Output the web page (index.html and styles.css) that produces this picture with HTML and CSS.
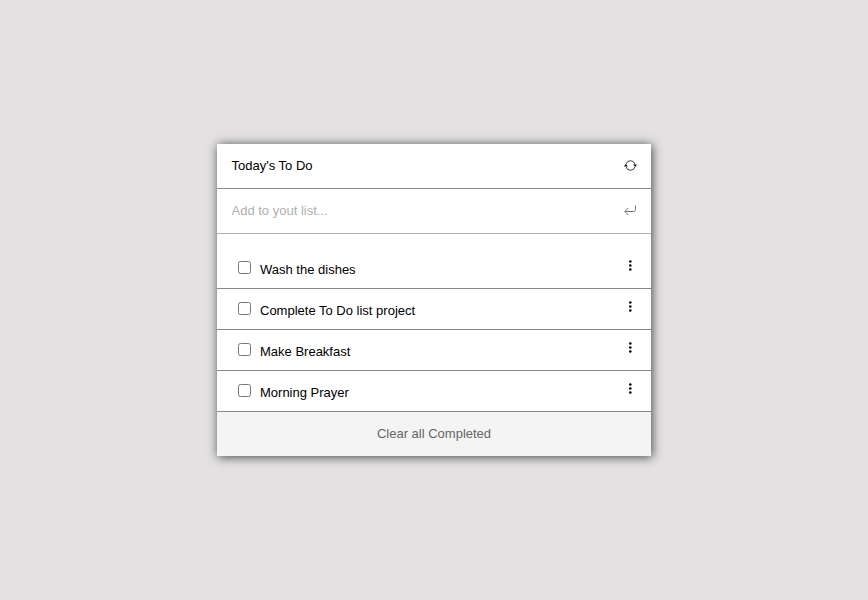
FILE: index.html
```html
<!DOCTYPE html>
<html lang="en">
<head>
<meta charset="utf-8">
<title>To Do</title>
<link rel="stylesheet" href="styles.css">
</head>
<body>
<main class="card">
  <header class="row head">
    <span>Today's To Do</span>
    <svg class="icon" viewBox="0 0 13 13"><path d="M2.1 5A4.6 4.6 0 0 1 10.9 5M10.9 8A4.6 4.6 0 0 1 2.1 8" fill="none" stroke="#222" stroke-width=".9"/><path d="M0 7.4 1.9 5.1 3.8 7.4zM9.2 5.6 11.1 7.9 13 5.6z"/></svg>
  </header>
  <div class="row add">
    <input class="entry" type="text" placeholder="Add to yout list...">
    <svg class="icon" viewBox="0 0 13 13"><path d="M11.5 1.5V5.5Q11.5 7.5 9.5 7.5H1M4.3 4 .9 7.5 4.3 11" fill="none" stroke="#777"/></svg>
  </div>
  <ul class="list">
    <li class="item"><input class="check" type="checkbox"><span class="text">Wash the dishes</span><svg class="dots" viewBox="0 0 3 12"><circle cx="1.3" cy="1.5" r="1.3"/><circle cx="1.3" cy="5.5" r="1.3"/><circle cx="1.3" cy="9.5" r="1.3"/></svg></li>
    <li class="item"><input class="check" type="checkbox"><span class="text">Complete To Do list project</span><svg class="dots" viewBox="0 0 3 12"><circle cx="1.3" cy="1.5" r="1.3"/><circle cx="1.3" cy="5.5" r="1.3"/><circle cx="1.3" cy="9.5" r="1.3"/></svg></li>
    <li class="item"><input class="check" type="checkbox"><span class="text">Make Breakfast</span><svg class="dots" viewBox="0 0 3 12"><circle cx="1.3" cy="1.5" r="1.3"/><circle cx="1.3" cy="5.5" r="1.3"/><circle cx="1.3" cy="9.5" r="1.3"/></svg></li>
    <li class="item"><input class="check" type="checkbox"><span class="text">Morning Prayer</span><svg class="dots" viewBox="0 0 3 12"><circle cx="1.3" cy="1.5" r="1.3"/><circle cx="1.3" cy="5.5" r="1.3"/><circle cx="1.3" cy="9.5" r="1.3"/></svg></li>
  </ul>
  <button class="clear" type="button">Clear all Completed</button>
</main>
</body>
</html>
```
FILE: styles.css
```css
* { box-sizing: border-box; }
body {
  margin: 0;
  min-height: 100vh;
  display: flex;
  align-items: center;
  justify-content: center;
  background: #e3e1e2;
  font: 13px "Liberation Sans", Arial, sans-serif;
  color: #000;
}
.card { width: 434px; background: #fff; box-shadow: 1px 1px 10px #444; }
.row {
  display: flex;
  align-items: center;
  justify-content: space-between;
  height: 45px;
  padding: 0 14px 2px 14.5px;
  border-bottom: 1px solid #888;
}
.add { border-color: #b0b0b0; }
.icon { width: 13px; height: 13px; }
.entry { flex: 1; border: 0; outline: 0; padding: 0; font: inherit; }
.entry::placeholder { color: #b0b0b0; }
.list { list-style: none; margin: 0; padding: 14px 0 0; }
.item {
  display: flex;
  align-items: flex-start;
  height: 41px;
  padding: 13px 19px 0 21px;
  border-bottom: 1px solid #888;
}
.check { width: 13px; height: 13px; margin: 0; }
.text { flex: 1; padding: 1px 0 0 9px; line-height: 15px; }
.dots { width: 3px; height: 12px; margin-top: -1px; }
.clear {
  display: block;
  width: 100%;
  height: 44px;
  padding: 0 0 2px;
  border: 0;
  background: #f4f4f4;
  color: #666;
  font: inherit;
}
```
